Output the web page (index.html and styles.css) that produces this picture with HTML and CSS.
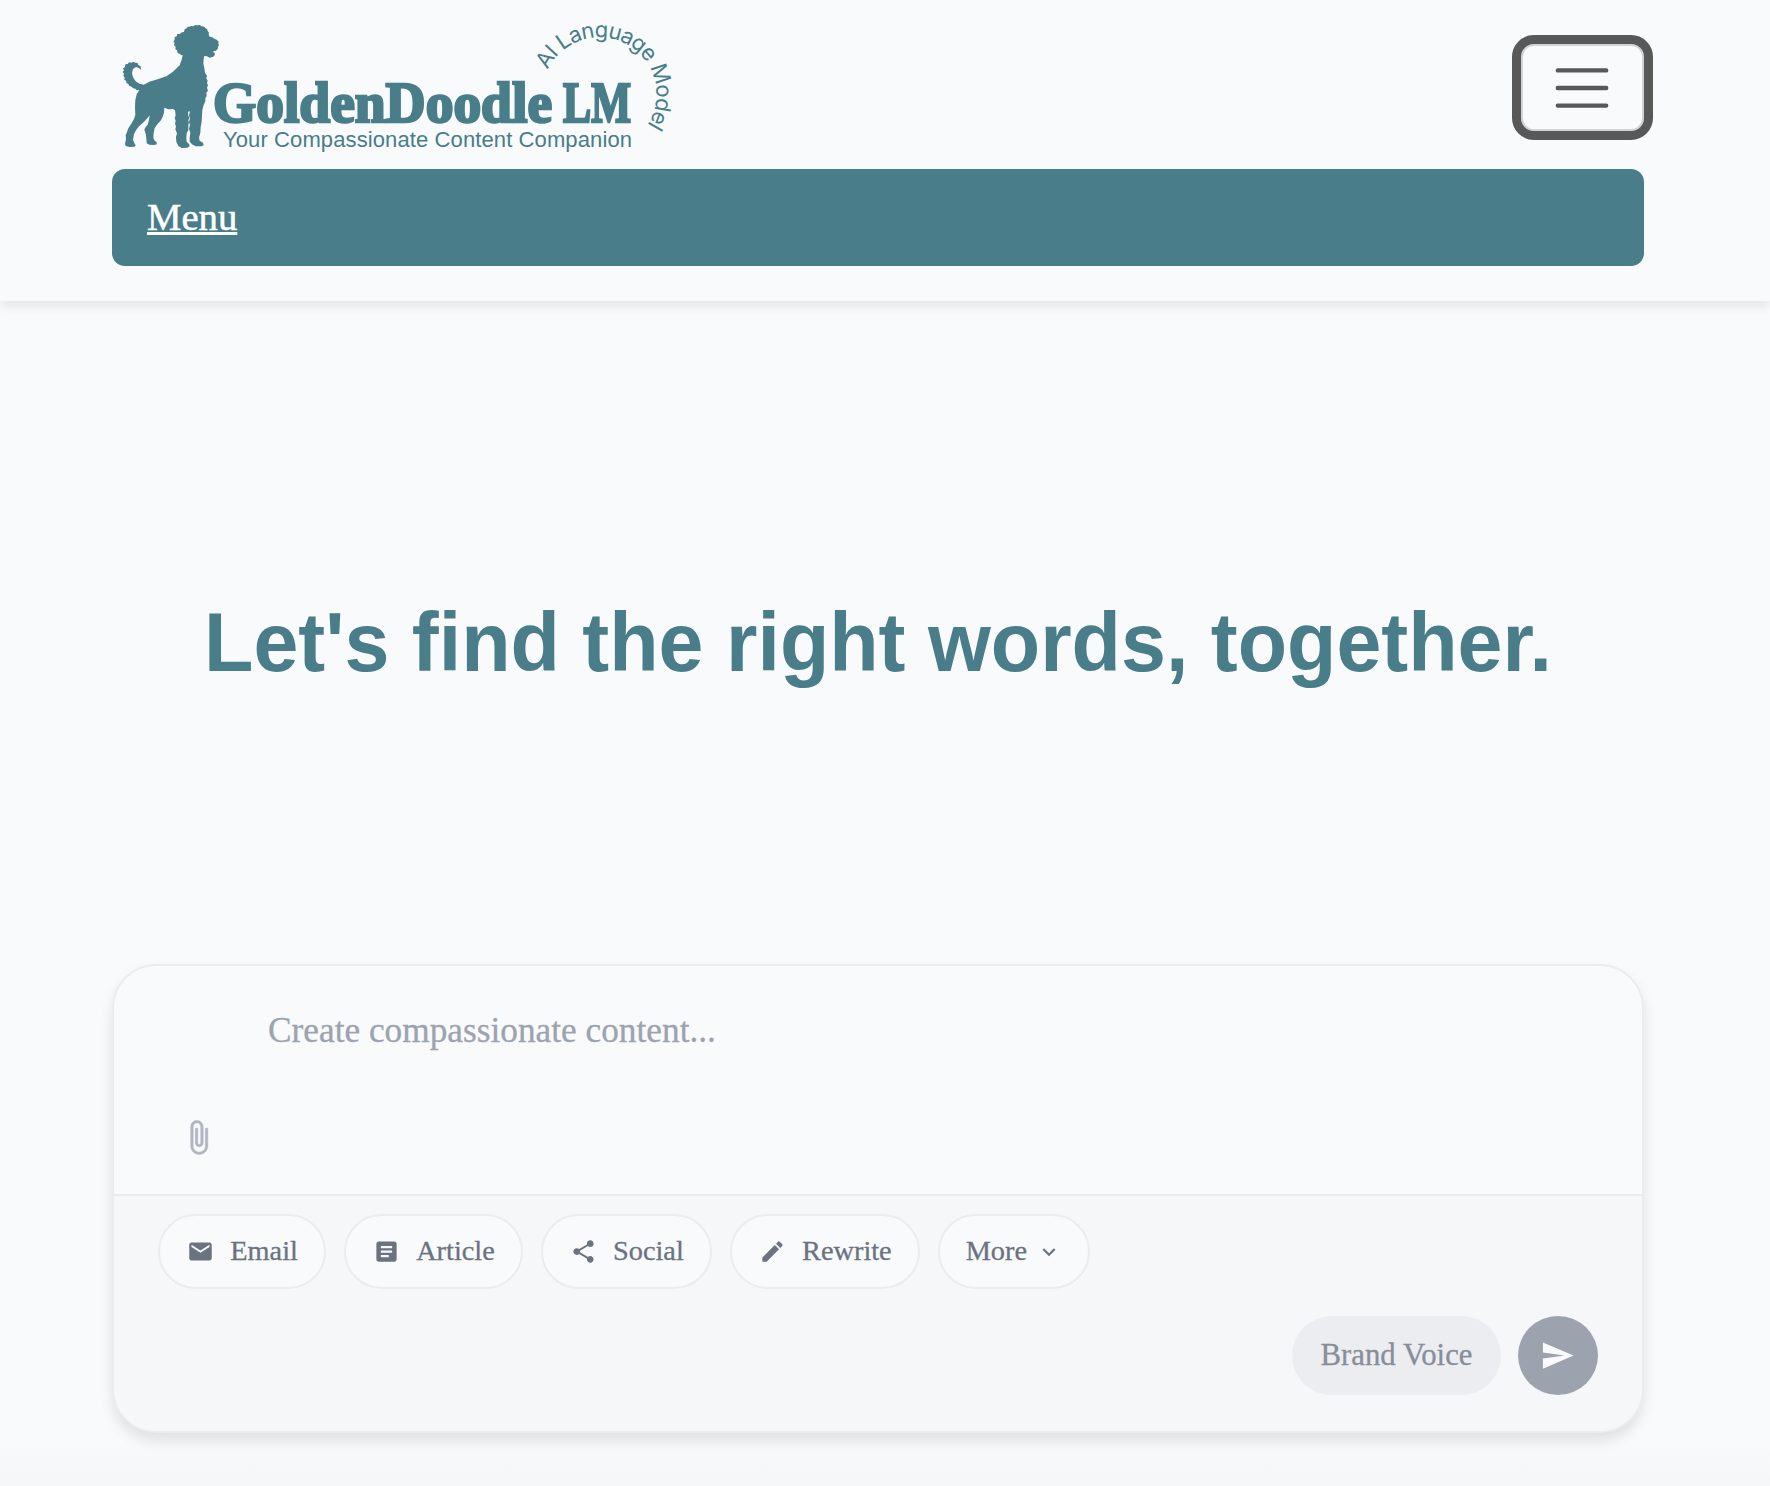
FILE: index.html
```html
<!DOCTYPE html>
<html lang="en">
<head>
<meta charset="utf-8">
<title>GoldenDoodle LM</title>
<link rel="stylesheet" href="styles.css">
</head>
<body>
<header class="header">
  <div class="topbar">
    <svg class="logo" viewBox="112 10 580 150" role="img" aria-label="GoldenDoodle LM">
      <path class="dog" transform="translate(110 10) scale(.33333)" d="M238 50 L244 48 L250 49 L256 45 L263 46 L269 45 L275 49 L283 50 L286 54 L291 57 L293 63 L297 68 L296 74 L299 80 L307 82 L313 86 L320 89 L326 95 L325 101 L327 105 L324 110 L323 117 L318 122 L312 123 L309 126 L315 130 L313 138 L306 142 L299 143 L291 139 L283 138 L281 147 L280 160 L283 175 L285 188 L291 197 L289 205 L293 212 L291 219 L294 226 L291 233 L294 242 L289 248 L290 258 L286 265 L286 274 L281 285 L277 300 L276 318 L275 335 L272 351 L271 368 L267 383 L269 392 L279 398 L281 406 L275 409 L257 409 L246 403 L239 395 L239 383 L241 368 L237 356 L240 344 L237 336 L240 325 L237 317 L240 304 L234 305 L235 317 L238 323 L235 331 L237 338 L235 346 L235 360 L230 370 L229 386 L230 395 L237 402 L239 409 L232 413 L215 414 L205 408 L199 396 L198 381 L201 370 L196 358 L198 349 L195 341 L197 332 L194 324 L197 316 L195 301 L189 297 L175 298 L163 293 L162 308 L158 321 L153 331 L142 343 L134 354 L131 370 L130 384 L134 392 L140 396 L140 403 L133 405 L118 404 L110 400 L109 384 L107 371 L103 359 L107 351 L113 344 L117 329 L119 316 L108 329 L96 341 L87 349 L78 361 L72 373 L69 390 L73 400 L77 405 L74 410 L58 411 L47 408 L45 402 L48 388 L47 376 L51 366 L55 355 L64 341 L72 327 L76 314 L75 292 L76 270 L80 253 L88 240 L80 241 L76 236 L69 235 L65 230 L58 228 L55 222 L49 219 L49 213 L43 209 L44 202 L40 198 L42 191 L38 186 L42 181 L39 175 L45 171 L46 163 L53 162 L57 157 L64 158 L70 155 L76 158 L83 159 L85 165 L92 169 L93 180 L87 174 L78 171 L69 177 L66 189 L69 202 L77 214 L88 221 L101 224 L118 215 L143 208 L169 199 L188 186 L209 166 L215 149 L218 136 L213 135 L209 131 L203 129 L201 121 L196 118 L197 110 L192 106 L194 98 L190 95 L194 89 L194 81 L200 79 L202 72 L209 72 L216 67 L222 66 L224 58 L230 55 L233 50 Z"/>
      <text class="wordmark" x="213" y="122" textLength="339" lengthAdjust="spacingAndGlyphs">GoldenDoodle</text>
      <text class="wordmark" x="563" y="122" textLength="68" lengthAdjust="spacingAndGlyphs">LM</text>
      <text class="tagline" x="223" y="147" textLength="409">Your Compassionate Content Companion</text>
      <path id="arc" fill="none" d="M547.8 70 A57 57 0 1 1 643 131"/>
      <text class="arc-text"><textPath href="#arc" textLength="186">AI Language Model</textPath></text>
    </svg>
    <button class="toggler" aria-label="Toggle navigation">
      <svg class="bars" viewBox="0 0 30 30"><path fill="none" stroke="#585858" stroke-width="2" stroke-linecap="round" d="M4 7h22M4 15h22M4 23h22"/></svg>
    </button>
  </div>
  <nav class="menu"><a class="menu-link" href="#">Menu</a></nav>
</header>
<main class="main">
  <h1 class="headline">Let's find the right words, together.</h1>
  <section class="composer">
    <div class="prompt">
      <div class="placeholder">Create compassionate content...</div>
      <svg class="clip" viewBox="0 0 24 24"><path d="M16.5 6v11.5c0 2.21-1.79 4-4 4s-4-1.79-4-4V5c0-1.38 1.12-2.5 2.5-2.5s2.500 1.120 2.500 2.500v10.500c0 .55-.45 1-1 1s-1-.45-1-1V6H10v9.500c0 1.380 1.120 2.500 2.500 2.500s2.500-1.120 2.500-2.500V5c0-2.210-1.790-4-4-4S7 2.790 7 5v12.500c0 3.040 2.460 5.500 5.500 5.500s5.500-2.460 5.500-5.500V6h-1.500z"/></svg>
    </div>
    <div class="actions">
      <div class="pills">
        <button class="pill"><svg class="icon" viewBox="0 0 24 24"><path d="M20 4H4c-1.100 0-2 .9-2 2v12c0 1.100.9 2 2 2h16c1.100 0 2-.9 2-2V6c0-1.100-.9-2-2-2zm0 4l-8 5-8-5V6l8 5 8-5v2z"/></svg>Email</button>
        <button class="pill"><svg class="icon" viewBox="0 0 24 24"><path d="M19 3H5c-1.100 0-2 .9-2 2v14c0 1.100.9 2 2 2h14c1.100 0 2-.9 2-2V5c0-1.100-.9-2-2-2zm-5 14H7v-2h7v2zm3-4H7v-2h10v2zm0-4H7V7h10v2z"/></svg>Article</button>
        <button class="pill"><svg class="icon" viewBox="0 0 24 24"><path d="M18 16.080c-.76 0-1.440.3-1.960.77L8.910 12.700c.05-.23.09-.46.09-.7s-.04-.47-.09-.7l7.050-4.110c.54.5 1.250.81 2.040.81 1.660 0 3-1.340 3-3s-1.340-3-3-3-3 1.340-3 3c0 .24.04.47.09.7L8.040 9.810C7.500 9.310 6.790 9 6 9c-1.660 0-3 1.340-3 3s1.340 3 3 3c.79 0 1.500-.31 2.040-.81l7.120 4.160c-.05.21-.08.43-.08.65 0 1.610 1.310 2.920 2.920 2.920s2.920-1.310 2.920-2.920-1.310-2.920-2.920-2.920z"/></svg>Social</button>
        <button class="pill"><svg class="icon" viewBox="0 0 24 24"><path d="M3 17.250V21h3.750L17.810 9.940l-3.750-3.750L3 17.250zM20.710 7.040c.39-.39.39-1.020 0-1.410l-2.340-2.340c-.39-.39-1.020-.39-1.410 0l-1.830 1.830 3.750 3.750 1.830-1.830z"/></svg>Rewrite</button>
        <button class="pill pill-more">More<svg class="chevron" viewBox="0 0 24 24"><path d="M7.410 8.590L12 13.170l4.590-4.580L18 10l-6 6-6-6z"/></svg></button>
      </div>
      <div class="submit-row">
        <button class="voice">Brand Voice</button>
        <button class="send" aria-label="Send"><svg class="plane" viewBox="0 0 24 24"><path d="M2.010 21L23 12 2.010 3 2 10l15 2-15 2z"/></svg></button>
      </div>
    </div>
  </section>
</main>
</body>
</html>
```
FILE: styles.css
```css
* { box-sizing: border-box; }
body {
  margin: 0;
  height: 1486px;
  overflow: hidden;
  background: linear-gradient(#f8fafc 1440px, #f4f6f8 1486px);
  font-family: "Liberation Serif", "Times New Roman", serif;
  color: #6b7280;
}
button { font: inherit; color: inherit; margin: 0; padding: 0; border: 0; }
svg { display: block; flex: none; }
.header {
  height: 301px;
  padding: 10px 126px 0 112px;
  background: #f8fafc;
  box-shadow: 0 7px 8px rgba(0, 0, 0, .065);
}
.topbar { display: flex; justify-content: space-between; height: 159px; }
.logo { width: 580px; height: 150px; }
.dog { fill: #487d89; }
.wordmark {
  font: bold 57px "Liberation Serif", serif;
  fill: #487d89;
  stroke: #487d89;
  stroke-width: 2.6px;
}
.tagline { font: 22px "Liberation Sans", Arial, sans-serif; fill: #487d89; }
.arc-text { font: 22px Inter, sans-serif; fill: #487d89; }
.toggler {
  display: grid;
  place-items: center;
  width: 123px;
  height: 87px;
  margin-top: 34px;
  padding-right: 2px;
  border: 2px solid #d2d3d4;
  border-radius: 13px;
  outline: 9px solid #585858;
  background: #f8fafc;
}
.bars { width: 66px; height: 66px; }
.menu {
  display: flex;
  align-items: center;
  height: 97px;
  padding: 0 35px 2px;
  border-radius: 13px;
  background: #487d89;
}
.menu-link {
  font-size: 38.72px;
  line-height: 44px;
  color: #fff;
  -webkit-text-stroke: .5px #fff;
  text-decoration-thickness: 3px;
  text-underline-offset: 2px;
}
.main { padding: 292px 126px 0 112px; }
.headline {
  margin: 0 0 273px;
  font: bold 80.8px/98px "Liberation Sans", Arial, sans-serif;
  text-align: center;
  white-space: nowrap;
  color: #487d89;
  transform: scaleY(1.04);
}
.composer {
  height: 469px;
  overflow: hidden;
  border: 2px solid #ebecee;
  border-radius: 44px;
  background: #f8fafc;
  box-shadow: 0 8px 14px rgba(0, 0, 0, .1);
}
.prompt { height: 228px; padding: 43px 66px 0; }
.placeholder {
  padding-left: 88px;
  font-size: 35.3px;
  line-height: 44px;
  color: #9ca3af;
  -webkit-text-stroke: .3px #9ca3af;
}
.clip { width: 37px; height: 37px; margin: 66px 0 0; fill: #b0b5bf; stroke: #b0b5bf; stroke-width: .4; }
.actions {
  height: 239px;
  padding: 18px 44px 0;
  border-top: 2px solid #ebecee;
  background: #f6f7f9;
}
.pills { display: flex; gap: 18px; }
.pill {
  display: flex;
  align-items: center;
  gap: 16.3px;
  height: 75px;
  padding: 0 26px 1px 27px;
  border: 2px solid #ebecee;
  border-radius: 38px;
  background: #f8fafc;
  font-size: 28.3px;
  -webkit-text-stroke: .3px #6b7280;
}
.icon { width: 27px; height: 27px; margin-top: 1px; fill: #6b7280; }
.pill-more { gap: 9px; padding-left: 26px; }
.chevron { width: 26px; height: 26px; margin-top: 2px; fill: #6b7280; }
.submit-row { display: flex; justify-content: flex-end; gap: 17px; margin-top: 27px; }
.voice {
  width: 209px;
  height: 79px;
  border-radius: 40px;
  background: #ecedf1;
  font-size: 30.8px;
  color: #888e98;
  -webkit-text-stroke: .3px #888e98;
}
.send {
  display: grid;
  place-items: center;
  width: 80px;
  height: 79px;
  padding-right: 2px;
  border-radius: 50%;
  background: #9ca3af;
}
.plane { width: 35px; height: 35px; fill: #f8fafc; }
```
